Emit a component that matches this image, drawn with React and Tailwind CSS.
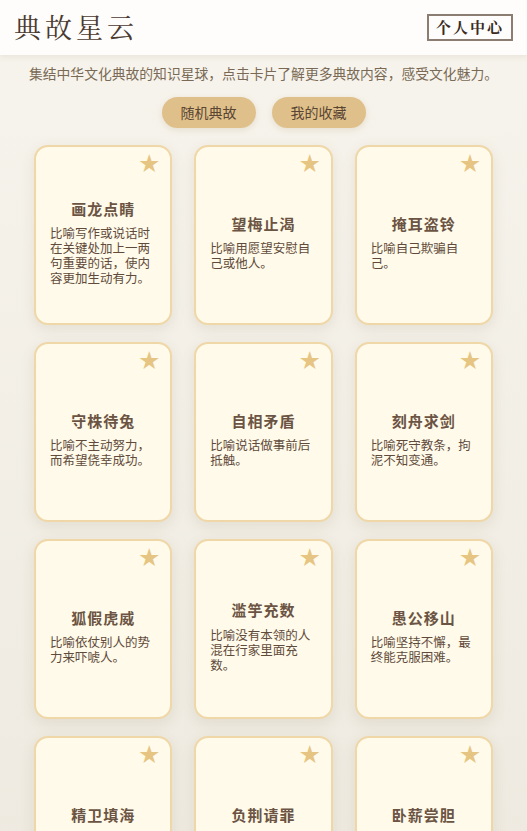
import { useState } from "react";

const stories = [
  { title: "画龙点睛", desc: "比喻写作或说话时在关键处加上一两句重要的话，使内容更加生动有力。" },
  { title: "望梅止渴", desc: "比喻用愿望安慰自己或他人。" },
  { title: "掩耳盗铃", desc: "比喻自己欺骗自己。" },
  { title: "守株待兔", desc: "比喻不主动努力，而希望侥幸成功。" },
  { title: "自相矛盾", desc: "比喻说话做事前后抵触。" },
  { title: "刻舟求剑", desc: "比喻死守教条，拘泥不知变通。" },
  { title: "狐假虎威", desc: "比喻依仗别人的势力来吓唬人。" },
  { title: "滥竽充数", desc: "比喻没有本领的人混在行家里面充数。" },
  { title: "愚公移山", desc: "比喻坚持不懈，最终能克服困难。" },
  { title: "精卫填海", desc: "比喻意志坚决，不畏艰难。" },
  { title: "负荆请罪", desc: "表示主动向人认错赔罪。" },
  { title: "卧薪尝胆", desc: "形容人刻苦自励，发奋图强。" },
];

function StoryCard({ story }) {
  return (
    <div className="relative h-[180px] rounded-[14px] border-2 border-[#efd7a8] bg-[#fffae9] shadow-[0_4px_14px_rgba(120,100,60,0.12)] flex flex-col items-center justify-center px-[14px] pt-[14px]">
      <span className="absolute top-[6px] right-[11px] text-[20px] leading-none text-[#e6c582]">★</span>
      <h3 className="text-[15px] font-bold text-[#6b5443] tracking-[1px]">{story.title}</h3>
      <p className="mt-[5px] w-full text-[12.5px] leading-[15px] text-[#5f4a3b]">{story.desc}</p>
    </div>
  );
}

export default function App() {
  const [list] = useState(stories);

  return (
    <div
      className="min-h-screen bg-gradient-to-b from-[#f7f4ed] to-[#ede9df]"
      style={{ fontFamily: '"Noto Sans CJK SC", "Noto Sans", sans-serif' }}
    >
      {/* Header */}
      <header className="h-[55px] bg-[#fefdfb] shadow-[0_2px_6px_rgba(120,100,60,0.10)] flex items-center justify-between pl-[14px] pr-[14px]">
        <h1
          className="text-[27px] tracking-[4px] text-[#4a3a30]"
          style={{ fontFamily: '"Noto Serif CJK SC", "Liberation Serif", serif' }}
        >
          典故星云
        </h1>
        <button
          className="h-[27px] w-[86px] border-2 border-[#8c7d73] text-[15px] font-bold tracking-[2px] text-[#3a2a22] flex items-center justify-center"
          style={{ fontFamily: '"Noto Serif CJK SC", "Liberation Serif", serif' }}
        >
          个人中心
        </button>
      </header>

      <p className="mt-[8px] text-center text-[13.8px] text-[#7a6a55]">
        集结中华文化典故的知识星球，点击卡片了解更多典故内容，感受文化魅力。
      </p>

      <div className="mt-[13px] flex justify-center gap-4">
        <button className="h-[31px] w-[94px] rounded-full bg-[#dfc08a] text-[14px] text-[#5a4532] shadow-[0_2px_6px_rgba(150,110,50,0.15)]">
          随机典故
        </button>
        <button className="h-[31px] w-[94px] rounded-full bg-[#dfc08a] text-[14px] text-[#5a4532] shadow-[0_2px_6px_rgba(150,110,50,0.15)]">
          我的收藏
        </button>
      </div>

      <div className="mt-[17px] px-[34px] pb-6 grid grid-cols-3 gap-x-[22px] gap-y-[17px]">
        {list.map((s) => (
          <StoryCard key={s.title} story={s} />
        ))}
      </div>
    </div>
  );
}
